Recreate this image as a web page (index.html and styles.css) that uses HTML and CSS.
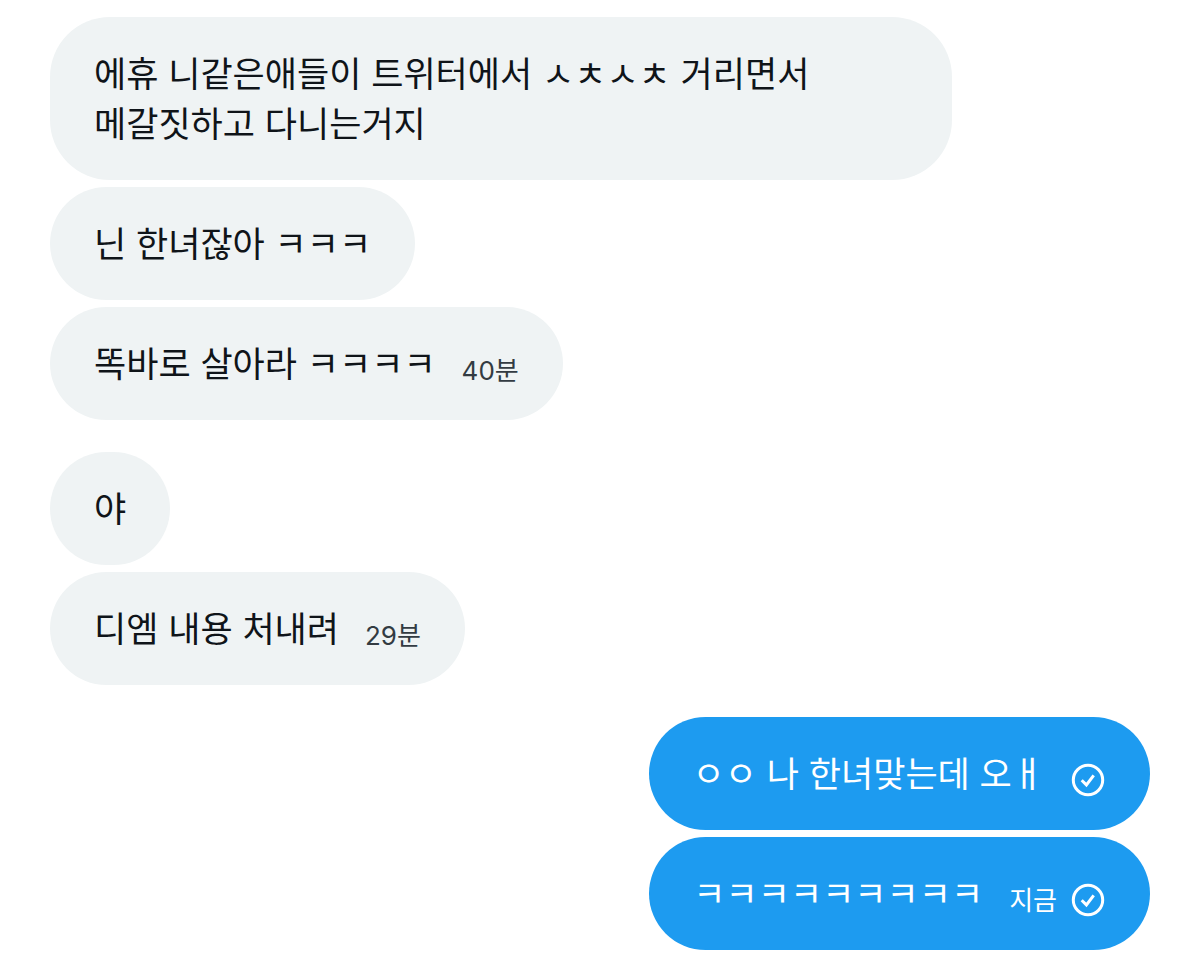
FILE: index.html
```html
<!DOCTYPE html>
<html lang="ko">
<head>
<meta charset="utf-8">
<meta name="viewport" content="width=device-width, initial-scale=1">
<title>대화</title>
<link rel="stylesheet" href="styles.css">
</head>
<body>
<main class="chat">
  <section class="group">
    <div class="bubble"><p class="text">에휴 니같은애들이 트위터에서 ㅅㅊㅅㅊ 거리면서 메갈짓하고 다니는거지</p></div>
    <div class="bubble"><p class="text">닌 한녀잖아 ㅋㅋㅋ</p></div>
    <div class="bubble"><p class="text">똑바로 살아라 ㅋㅋㅋㅋ</p><time class="time">40분</time></div>
  </section>
  <section class="group">
    <div class="bubble"><p class="text">야</p></div>
    <div class="bubble"><p class="text">디엠 내용 처내려</p><time class="time">29분</time></div>
  </section>
  <section class="group sent">
    <div class="bubble"><p class="text">ㅇㅇ 나 한녀맞는데 오ㅐ</p>
      <svg class="check" viewBox="0 0 34 34" role="img" aria-label="보냄"><circle cx="17" cy="17" r="14.7"/><path d="M10.7 17.3l4.7 4.6 7.3-9.6"/></svg></div>
    <div class="bubble"><p class="text">ㅋㅋㅋㅋㅋㅋㅋㅋㅋ</p><time class="time">지금</time>
      <svg class="check" viewBox="0 0 34 34" role="img" aria-label="보냄"><circle cx="17" cy="17" r="14.7"/><path d="M10.7 17.3l4.7 4.6 7.3-9.6"/></svg></div>
  </section>
</main>
</body>
</html>
```
FILE: styles.css
```css
* { box-sizing: border-box; }
body {
  margin: 0;
  background: #fff;
  color: #0f1419;
  font-family: "Noto Sans CJK KR", sans-serif;
}
.chat {
  display: flex;
  flex-direction: column;
  gap: 32px;
  padding: 17px 50px 22px;
}
.group {
  display: flex;
  flex-direction: column;
  align-items: flex-start;
  gap: 7px;
}
.bubble {
  display: flex;
  align-items: flex-end;
  max-width: 82%;
  padding: 30px 44px 33px;
  border-radius: 60px;
  background: #eff3f4;
}
.text {
  margin: 0;
  font-size: 35px;
  line-height: 50px;
  word-break: keep-all;
}
.time {
  margin-left: 26px;
  font-family: Inter, "Noto Sans CJK KR", sans-serif;
  font-size: 26px;
  line-height: 33px;
  color: #333b42;
  white-space: nowrap;
}
.sent { align-items: flex-end; }
.sent .bubble {
  padding-right: 45px;
  background: #1d9bf0;
  color: #fff;
}
.sent .time { color: #fff; }
.check {
  flex: none;
  width: 34px;
  height: 34px;
  margin-left: 14px;
  fill: none;
  stroke: #fff;
  stroke-width: 3;
}
.text + .check { margin-left: 27px; }
```
